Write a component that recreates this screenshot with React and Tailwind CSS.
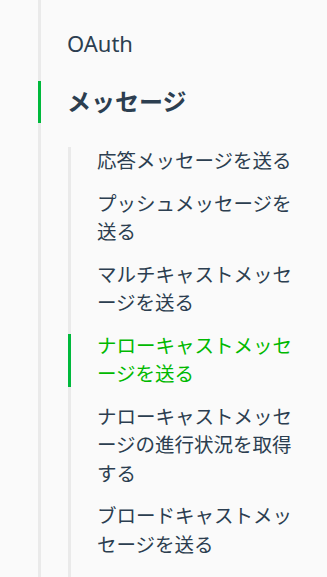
const font = { fontFamily: '"Noto Sans", "Noto Sans CJK JP", sans-serif' };

const items = [
  { label: '応答メッセージを送る' },
  { label: 'プッシュメッセージを送る' },
  { label: 'マルチキャストメッセージを送る' },
  { label: 'ナローキャストメッセージを送る', active: true },
  { label: 'ナローキャストメッセージの進行状況を取得する' },
  { label: 'ブロードキャストメッセージを送る' },
];

function SubItem({ label, active }) {
  return (
    <li className="relative mt-[14px] first:mt-0 pl-[26px]">
      {active && (
        <span className="absolute -left-[3px] top-[2px] h-[53px] w-[3px] bg-[#00b93c]" />
      )}
      <a
        href="#"
        className={
          'block w-[205px] text-[19.5px] leading-[28.5px] ' +
          (active ? 'text-[#00b900]' : 'text-[#2c3e50]')
        }
      >
        {label}
      </a>
    </li>
  );
}

export default function App() {
  return (
    <div className="min-h-[577px] bg-[#fafafa] pl-[38px]" style={font}>
      <nav className="min-h-[577px] border-l-[3px] border-[#eaeaea] pt-[29px]">
        <a href="#" className="block pl-[26px] text-[22px] leading-[28px] text-[#2c3e50]">
          OAuth
        </a>
        <div className="relative mt-[24px] h-[42px] pl-[26px]">
          <span className="absolute -left-[3px] top-0 h-full w-[3px] bg-[#00b93c]" />
          <span className="block text-[24px] font-bold leading-[42px] text-[#2c3e50]">
            メッセージ
          </span>
        </div>
        <ul className="mt-[24px] ml-[27px] w-[234px] border-l-[3px] border-[#eaeaea] pb-[40px]">
          {items.map((it) => (
            <SubItem key={it.label} {...it} />
          ))}
        </ul>
      </nav>
    </div>
  );
}
